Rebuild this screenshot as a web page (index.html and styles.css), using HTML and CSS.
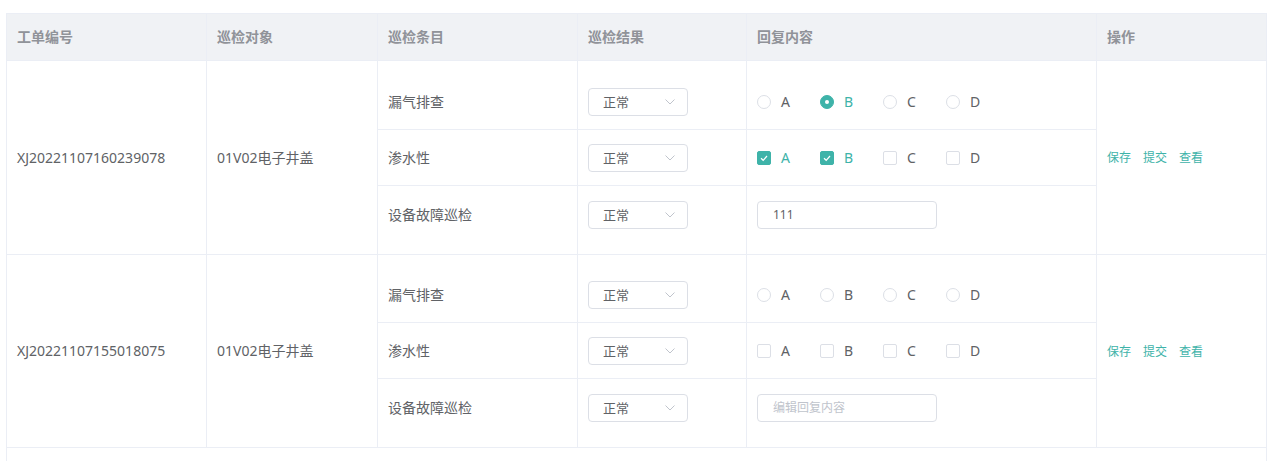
FILE: index.html
```html
<!DOCTYPE html>
<html lang="zh">
<head>
<meta charset="utf-8">
<title>巡检工单</title>
<link rel="stylesheet" href="styles.css">
</head>
<body>
<div class="page">
<table class="grid">
  <colgroup>
    <col class="c1"><col class="c2"><col class="c3"><col class="c4"><col class="c5"><col class="c6">
  </colgroup>
  <thead>
    <tr>
      <th>工单编号</th><th>巡检对象</th><th>巡检条目</th><th>巡检结果</th><th>回复内容</th><th>操作</th>
    </tr>
  </thead>
  <tbody>
    <tr class="sub first top">
      <td rowspan="3" class="main">XJ20221107160239078</td>
      <td rowspan="3" class="main">01V02电子井盖</td>
      <td>漏气排查</td>
      <td><div class="select"><span>正常</span><svg class="arrow" viewBox="0 0 10 6" width="10" height="6"><polyline points="0.5,0.5 5,5 9.5,0.5" fill="none" stroke="#c0c4cc" stroke-width="1"/></svg></div></td>
      <td>
        <div class="group">
          <label class="opt"><span class="radio"></span><span class="lbl">A</span></label>
          <label class="opt on"><span class="radio"></span><span class="lbl">B</span></label>
          <label class="opt"><span class="radio"></span><span class="lbl">C</span></label>
          <label class="opt"><span class="radio"></span><span class="lbl">D</span></label>
        </div>
      </td>
      <td rowspan="3" class="main ops"><a>保存</a><a>提交</a><a>查看</a></td>
    </tr>
    <tr class="sub mid">
      <td>渗水性</td>
      <td><div class="select"><span>正常</span><svg class="arrow" viewBox="0 0 10 6" width="10" height="6"><polyline points="0.5,0.5 5,5 9.5,0.5" fill="none" stroke="#c0c4cc" stroke-width="1"/></svg></div></td>
      <td>
        <div class="group">
          <label class="opt on"><span class="check"><svg viewBox="0 0 14 14" width="14" height="14"><polyline points="4,7.2 6.2,9.3 10,5" fill="none" stroke="#fff" stroke-width="1.2"/></svg></span><span class="lbl">A</span></label>
          <label class="opt on"><span class="check"><svg viewBox="0 0 14 14" width="14" height="14"><polyline points="4,7.2 6.2,9.3 10,5" fill="none" stroke="#fff" stroke-width="1.2"/></svg></span><span class="lbl">B</span></label>
          <label class="opt"><span class="check"></span><span class="lbl">C</span></label>
          <label class="opt"><span class="check"></span><span class="lbl">D</span></label>
        </div>
      </td>
    </tr>
    <tr class="sub last">
      <td>设备故障巡检</td>
      <td><div class="select"><span>正常</span><svg class="arrow" viewBox="0 0 10 6" width="10" height="6"><polyline points="0.5,0.5 5,5 9.5,0.5" fill="none" stroke="#c0c4cc" stroke-width="1"/></svg></div></td>
      <td><div class="input">111</div></td>
    </tr>

    <tr class="sub first">
      <td rowspan="3" class="main">XJ20221107155018075</td>
      <td rowspan="3" class="main">01V02电子井盖</td>
      <td>漏气排查</td>
      <td><div class="select"><span>正常</span><svg class="arrow" viewBox="0 0 10 6" width="10" height="6"><polyline points="0.5,0.5 5,5 9.5,0.5" fill="none" stroke="#c0c4cc" stroke-width="1"/></svg></div></td>
      <td>
        <div class="group">
          <label class="opt"><span class="radio"></span><span class="lbl">A</span></label>
          <label class="opt"><span class="radio"></span><span class="lbl">B</span></label>
          <label class="opt"><span class="radio"></span><span class="lbl">C</span></label>
          <label class="opt"><span class="radio"></span><span class="lbl">D</span></label>
        </div>
      </td>
      <td rowspan="3" class="main ops"><a>保存</a><a>提交</a><a>查看</a></td>
    </tr>
    <tr class="sub mid">
      <td>渗水性</td>
      <td><div class="select"><span>正常</span><svg class="arrow" viewBox="0 0 10 6" width="10" height="6"><polyline points="0.5,0.5 5,5 9.5,0.5" fill="none" stroke="#c0c4cc" stroke-width="1"/></svg></div></td>
      <td>
        <div class="group">
          <label class="opt"><span class="check"></span><span class="lbl">A</span></label>
          <label class="opt"><span class="check"></span><span class="lbl">B</span></label>
          <label class="opt"><span class="check"></span><span class="lbl">C</span></label>
          <label class="opt"><span class="check"></span><span class="lbl">D</span></label>
        </div>
      </td>
    </tr>
    <tr class="sub last">
      <td>设备故障巡检</td>
      <td><div class="select"><span>正常</span><svg class="arrow" viewBox="0 0 10 6" width="10" height="6"><polyline points="0.5,0.5 5,5 9.5,0.5" fill="none" stroke="#c0c4cc" stroke-width="1"/></svg></div></td>
      <td><div class="input placeholder">编辑回复内容</div></td>
    </tr>
    <tr class="tail"><td colspan="6"></td></tr>
  </tbody>
</table>
</div>
</body>
</html>
```

FILE: styles.css
```css
html, body {
  margin: 0;
  padding: 0;
  background: #fff;
  overflow: hidden;
  height: 461px;
}
body {
  font-family: "Noto Sans", "Noto Sans CJK SC", sans-serif;
  color: #606266;
  font-size: 14px;
}
.page {
  padding: 13px 0 0 6px;
}
.grid {
  border-collapse: collapse;
  table-layout: fixed;
  width: 1260px;
}
.c1 { width: 200px; }
.c2 { width: 171px; }
.c3 { width: 200px; }
.c4 { width: 169px; }
.c5 { width: 350px; }
.c6 { width: 170px; }

.grid th,
.grid td {
  border: 1px solid #ebeef5;
  padding: 0 10px;
  text-align: left;
  line-height: 28px;
}
.grid th {
  background: #f0f2f5;
  color: #909399;
  font-weight: bold;
  font-size: 14px;
  height: 47px;
  box-sizing: border-box;
  padding-top: 0;
  padding-bottom: 0;
  line-height: 20px;
  vertical-align: middle;
}
.grid td {
  vertical-align: middle;
  white-space: nowrap;
}
.sub.first td { padding-top: 26px; padding-bottom: 13px; }
.sub.first.top td { padding-top: 27px; }
.sub.mid td { padding-top: 14px; padding-bottom: 13px; }
.sub.last td { padding-top: 15px; padding-bottom: 25px; }
.grid .sub td.main { padding-top: 0; padding-bottom: 0; }
.tail td {
  height: 13px;
  border-bottom: none;
}

.select {
  width: 100px;
  height: 28px;
  box-sizing: border-box;
  border: 1px solid #dcdfe6;
  border-radius: 4px;
  display: flex;
  align-items: center;
  justify-content: space-between;
  padding: 0 12px 0 14px;
  font-size: 13px;
  color: #606266;
}
.select span { line-height: 26px; }
.arrow { display: block; }

.group {
  display: flex;
  align-items: center;
  height: 28px;
}
.opt {
  display: flex;
  align-items: center;
  margin-right: 30px;
  color: #606266;
  font-size: 14px;
}
.opt .lbl {
  padding-left: 10px;
  line-height: 20px;
}
.radio {
  width: 14px;
  height: 14px;
  box-sizing: border-box;
  border: 1px solid #dcdfe6;
  border-radius: 50%;
  background: #fff;
  position: relative;
}
.opt.on .radio {
  border-color: #3eb3a9;
  background: #3eb3a9;
}
.opt.on .radio::after {
  content: "";
  position: absolute;
  left: 4px;
  top: 4px;
  width: 4px;
  height: 4px;
  border-radius: 50%;
  background: #fff;
}
.check {
  width: 14px;
  height: 14px;
  box-sizing: border-box;
  border: 1px solid #dcdfe6;
  border-radius: 2px;
  background: #fff;
  display: block;
  position: relative;
}
.check svg {
  position: absolute;
  left: -1px;
  top: -1px;
}
.opt.on .check {
  border-color: #3eb3a9;
  background: #3eb3a9;
}
.opt.on .lbl { color: #3eb3a9; }

.input {
  width: 180px;
  height: 28px;
  box-sizing: border-box;
  border: 1px solid #dcdfe6;
  border-radius: 4px;
  padding: 0 15px;
  font-size: 12px;
  line-height: 26px;
  color: #606266;
}
.input.placeholder { color: #c0c4cc; }

.ops a {
  color: #3eb3a9;
  font-size: 12px;
  margin-right: 12px;
  cursor: pointer;
}
```
